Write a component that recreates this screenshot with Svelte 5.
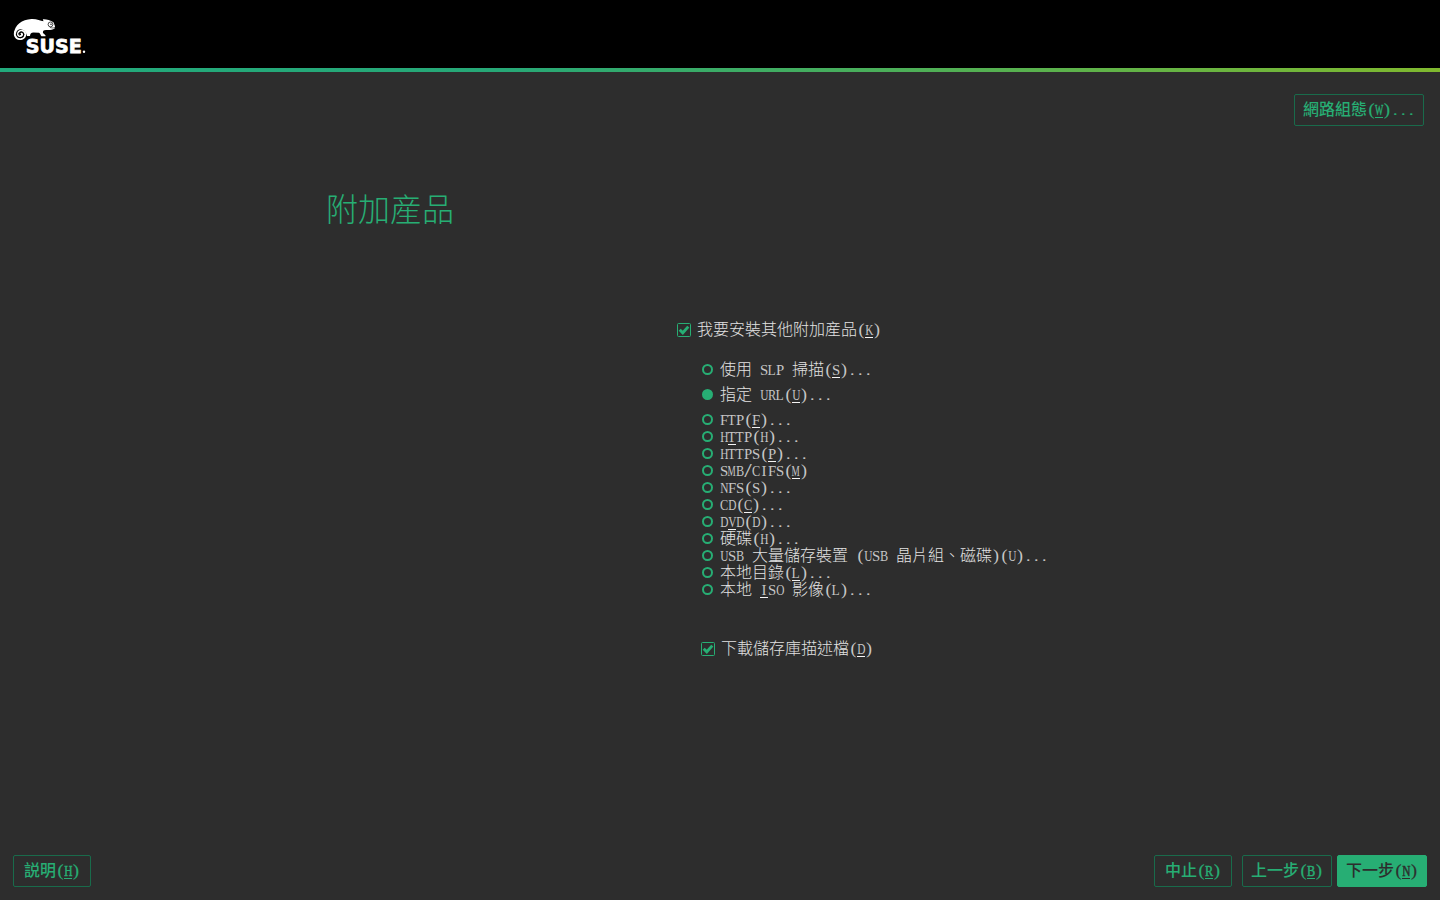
<script>
  // Advance widths of the Latin serif, in em, used to fit each glyph into a half-width cell.
  const advance = {
    A: .722, B: .667, C: .667, D: .722, F: .556, H: .722, I: .333, K: .722, L: .611,
    M: .889, N: .722, O: .722, P: .556, R: .667, S: .556, T: .611, U: .722, V: .722, W: .944,
    '(': .333, ')': .333, '.': .25, '/': .278, ' ': .25
  };
  const CELL = 8;
  const SIZE = 15;
  // Punctuation is drawn a little larger than the letters.
  const marks = {
    '(': 'translateY(-.5px) scale(1.2,1.08)',
    ')': 'translate(-.5px,-.5px) scale(1.2,1.08)',
    '.': 'translate(.3px,-.3px) scaleX(1.2)',
    '/': 'scale(1.800,1.2)'
  };

  // "_X" marks X as the keyboard mnemonic.
  function parse(label) {
    const out = [];
    const chars = Array.from(label);
    for (let i = 0; i < chars.length; i++) {
      const key = chars[i] === '_';
      if (key) i++;
      const c = chars[i];
      const w = advance[c];
      if (w) {
        const px = w * SIZE;
        const fit = marks[c] ?? `scaleX(${Math.min(1, 8.2 / px)})`;
        out.push({ c, key, half: true, mark: c in marks, style: `margin:0 ${(CELL - px) / 2}px;width:${px}px;transform:${fit}` });
      } else {
        const last = out[out.length - 1];
        if (last && !last.half) last.c += c;
        else out.push({ c, key, half: false });
      }
    }
    return out;
  }

  const sources = [
    { label: '使用 SLP 掃描(_S)...', tall: true },
    { label: '指定 URL(_U)...', tall: true, on: true },
    { label: 'FTP(_F)...' },
    { label: 'H_TTP(H)...' },
    { label: 'HTTPS(_P)...' },
    { label: 'SMB/CIFS(_M)' },
    { label: 'NFS(S)...' },
    { label: 'CD(_C)...' },
    { label: 'D_VD(D)...' },
    { label: '硬碟(H)...' },
    { label: 'USB 大量儲存裝置 (USB 晶片組、磁碟)(U)...' },
    { label: '本地目錄(_L)...' },
    { label: '本地 _ISO 影像(L)...' }
  ];
</script>

{#snippet caption(label)}<span class="caption">{#each parse(label) as p}{#if p.half}<span class="cell" class:key={p.key}><span class="half" class:mark={p.mark} style={p.style}>{p.c}</span></span>{:else}{p.c}{/if}{/each}</span>{/snippet}

{#snippet tick()}
  <svg class="tick" width="14" height="14" viewBox="0 0 14 14">
    <rect x=".5" y=".5" width="13" height="13" rx="1" fill="none" stroke="#27ae74" />
    <path d="M2.700 6.700 5.800 9.800 11.300 3.600" fill="none" stroke="#27ae74" stroke-width="2.900" />
  </svg>
{/snippet}

<div class="screen">
  <header>
    <svg class="logo" width="74" height="44" viewBox="0 0 74 44">
      <path fill="#fff" d="M1 16.500C1.500 8 9 2.500 18.500 2 24 1.800 27 3.500 30.500 4.300L29.800 2.300C33 2 37 3 40.500 5.200L42 9.200 41.600 11.500C39 13.300 35.500 13.200 33 13 30.500 13 29.500 14.200 30 16L32.500 18.200V19.300H28.500C27.500 18.500 27.500 16.500 26 15.800L20.500 15.500C18 15.700 17 17 17 19H14C13.500 16.500 12 13 8 12.300 5 12.300 3 14 3 17Z" />
      <path fill="none" stroke="#fff" stroke-width="1.900" stroke-linecap="round" d="M2 15C.8 20.500 5.200 23 9 21.800 13.500 20.300 13.300 14.200 8.800 13.600 5 13.300 3.800 18 6.500 19 8.500 19.500 10 17.500 8.500 16.500" />
      <path fill="none" stroke="#000" stroke-width=".9" d="M6.500 20.500C10.500 21.500 12.300 16.500 9.300 15.100 7 14.200 5 16 5.800 17.600 6.600 18.500 7.500 18.100 7.400 17.300" />
      <circle cx="37.500" cy="7.400" r="2.400" fill="#fff" stroke="#000" stroke-width=".7" />
      <circle cx="38" cy="7.200" r=".7" />
      <path d="M41.800 10.500C40 11.200 38.500 11 36.800 10.400" fill="none" stroke="#000" stroke-width=".6" />
      <text x="12.800" y="35.500" textLength="56" lengthAdjust="spacingAndGlyphs">SUSE</text>
      <circle cx="71" cy="34.700" r="1.200" fill="#fff" />
    </svg>
  </header>
  <div class="stripe"></div>

  <main>
    <div class="top"><button class="wide">{@render caption('網路組態(_W)...')}</button></div>
    <h1>附加産品</h1>
    <section>
      <label class="check">{@render tick()}{@render caption('我要安裝其他附加産品(_K)')}</label>
      <div class="sources">
        {#each sources as s}
          <div class="source" class:tall={s.tall}><i class:on={s.on}></i>{@render caption(s.label)}</div>
        {/each}
      </div>
      <label class="check nested">{@render tick()}{@render caption('下載儲存庫描述檔(_D)')}</label>
    </section>
  </main>

  <footer>
    <button class="help">{@render caption('説明(_H)')}</button>
    <button class="abort">{@render caption('中止(_R)')}</button>
    <button class="back">{@render caption('上一步(_B)')}</button>
    <button class="next">{@render caption('下一步(_N)')}</button>
  </footer>
</div>

<style>
  :global(body) { background: #2d2d2d; }
  .screen {
    width: 1440px; height: 900px; box-sizing: border-box; overflow: hidden;
    display: flex; flex-direction: column; background: #2d2d2d; color: #e2e2e2;
    font: 300 16px/17px "Liberation Serif", "Noto Sans CJK TC", serif;
  }
  header { height: 68px; background: #000; padding: 17px 0 0 13px; box-sizing: border-box; }
  .logo { display: block; overflow: visible; }
  .logo text { font: bold 20px "DejaVu Sans", sans-serif; fill: #fff; stroke: #fff; stroke-width: .8px; }
  .stripe { height: 4px; background: linear-gradient(90deg, #22aa7c 0%, #27a877 35%, #80b92f 100%); }
  main { flex: 1; display: flex; flex-direction: column; }
  .top { display: flex; justify-content: flex-end; padding: 22px 16px 0 0; }
  h1 {
    margin: 61px 0 0 326px; height: 40px; color: #27ae74;
    font: 200 32px/40px "Noto Sans CJK TC", sans-serif;
  }
  section { padding: 94px 0 0 677px; }
  .check { display: flex; align-items: center; gap: 6px; height: 17px; }
  .tick { display: block; flex: none; }
  .nested { margin: 42px 0 0 24px; }
  .sources { padding: 19px 0 0 25px; }
  .source { display: flex; align-items: center; gap: 7px; height: 17px; }
  .source.tall { height: 25px; }
  .source.tall + .source:not(.tall) { margin-top: 4px; }
  .source i { box-sizing: border-box; width: 11px; height: 11px; border: 2px solid #27ae74; border-radius: 50%; flex: none; }
  .source i.on { background: #27ae74; }
  .caption { white-space: pre; display: block; height: 17px; line-height: 17px; }
  .cell { position: relative; font-size: 15px; }
  section .cell { color: #c6c6c6; }
  .half { display: inline-block; line-height: 15px; white-space: pre; }
  .half.mark { font-weight: 400; }
  .key::after { content: ""; position: absolute; left: 0; width: 8px; bottom: 0; height: 1px; background: #f4f4f4; }
  footer { display: flex; padding: 0 13px 13px; }
  button {
    box-sizing: border-box; height: 32px; padding: 0 0 2px; display: flex; align-items: center; justify-content: center;
    color: #27ae74; background: transparent; border: 1px solid #196b4b; border-radius: 2px;
    font: inherit; font-weight: 500;
  }
  button .cell { -webkit-text-stroke: .5px currentColor; }
  button .mark { -webkit-text-stroke: .2px currentColor; }
  button .key::after { background: currentColor; }
  .wide { width: 130px; }
  .help, .abort { width: 78px; }
  .back, .next { width: 90px; }
  .abort { margin-left: auto; }
  .back { margin: 0 5px 0 10px; }
  .next { background: #27ae74; border-color: #27ae74; color: #2d2d2d; }
</style>
